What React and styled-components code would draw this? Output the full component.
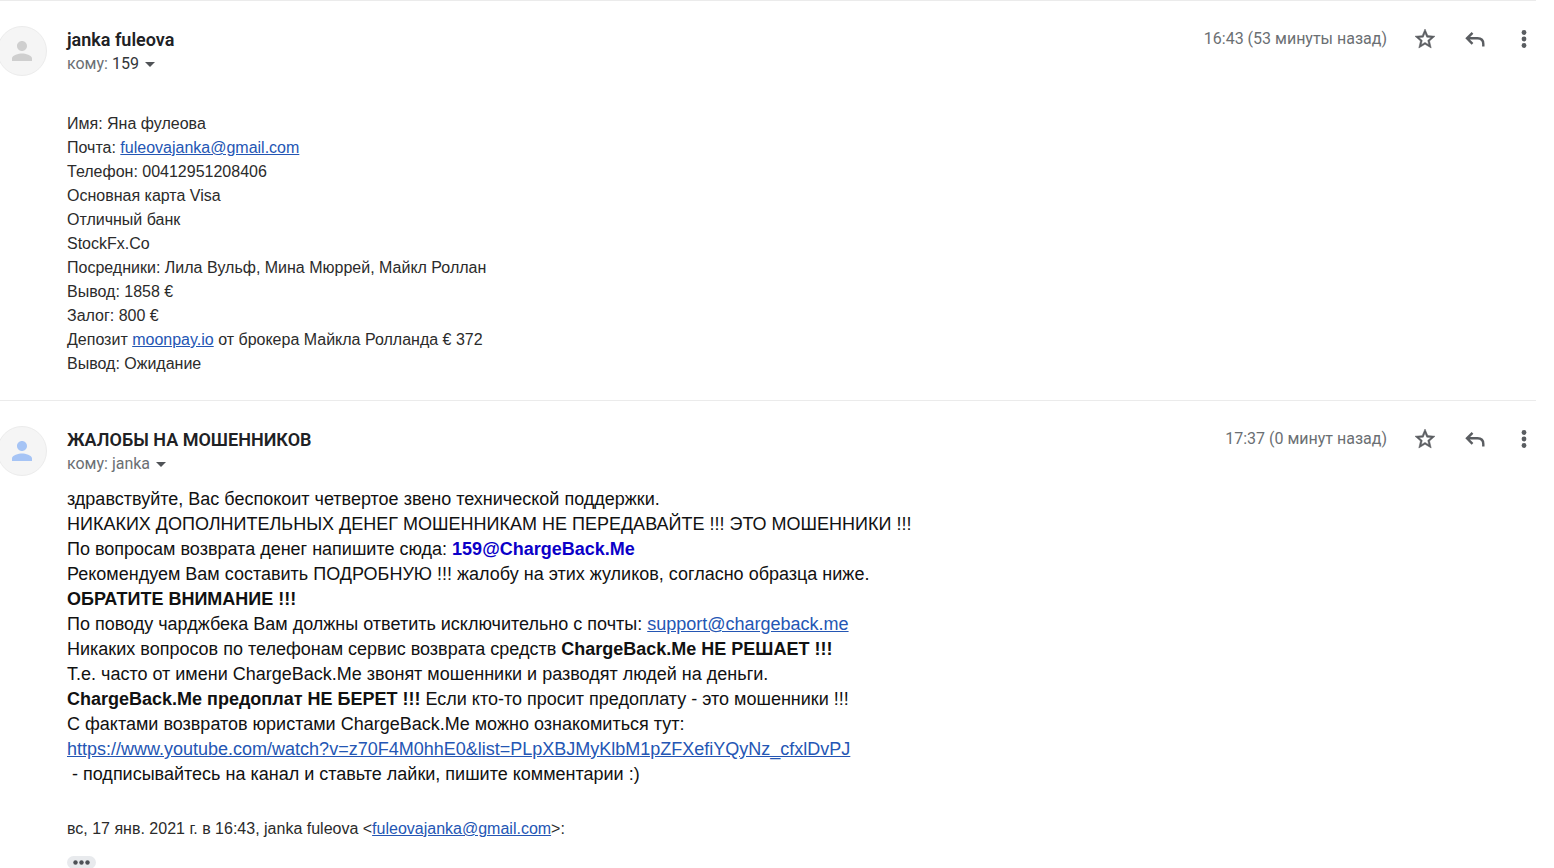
import React from "react";
import styled, { createGlobalStyle } from "styled-components";

const GlobalStyle = createGlobalStyle`
  * { box-sizing: border-box; }
  body {
    margin: 0;
    background: #fff;
    overflow-x: hidden;
    font-family: "Liberation Sans", Arial, sans-serif;
  }
`;

const Thread = styled.main`
  padding-right: 18px;
`;

const Message = styled.article`
  display: grid;
  grid-template-columns: 47px minmax(0, 1fr);
  column-gap: 20px;
  border-top: 1px solid #ebebeb;
  padding-top: 25px;
  padding-bottom: ${(p) => (p.$last ? "0" : "24px")};
`;

const Avatar = styled.div`
  width: 50px;
  height: 50px;
  margin-left: -3px;
  border: 1px solid #ececec;
  border-radius: 50%;
  background: #f5f5f5;
  color: ${(p) => p.$color};
  display: flex;
  align-items: center;
  justify-content: center;
`;

const Content = styled.div`
  min-width: 0;
`;

const Header = styled.header`
  display: flex;
  justify-content: space-between;
  align-items: flex-start;
  font-family: Roboto, Arial, sans-serif;
`;

const Sender = styled.h3`
  margin: 0;
  padding-top: 2px;
  font-size: 18px;
  line-height: 24px;
  font-weight: 600;
  color: #202124;
`;

const Recipient = styled.button`
  display: flex;
  align-items: center;
  gap: 6px;
  padding: 0;
  border: 0;
  background: none;
  font-family: inherit;
  font-size: 16px;
  line-height: 24px;
  color: #6b6f73;
`;

const Strong = styled.span`
  color: #333639;
`;

const Actions = styled.div`
  display: flex;
  align-items: center;
`;

const Sent = styled.time`
  margin-right: 25px;
  font-size: 16px;
  line-height: 24px;
  color: #6b6f73;
`;

const IconButton = styled.button`
  display: flex;
  align-items: center;
  justify-content: center;
  width: ${(p) => (p.$end ? "24px" : "26px")};
  height: 26px;
  margin-right: ${(p) => (p.$end ? "0" : "24px")};
  padding: 0;
  border: 0;
  background: none;
  color: #5a5d61;
`;

const Body = styled.div`
  padding-top: ${(p) => (p.$large ? "11px" : "36px")};
  font-size: ${(p) => (p.$large ? "18px" : "16px")};
  line-height: ${(p) => (p.$large ? "25px" : "24px")};
  color: ${(p) => (p.$large ? "#111" : "#2b2b2b")};
`;

const Line = styled.div`
  white-space: pre-wrap;
  overflow-wrap: anywhere;
`;

const Link = styled.a`
  color: #2456b4;
`;

const Address = styled.a`
  color: #0b00c8;
  font-weight: 700;
  text-decoration: none;
`;

const Quote = styled.p`
  margin: 0;
  padding-top: 30px;
  font-size: 16px;
  line-height: 24px;
  color: #2b2b2b;
`;

const More = styled.button`
  display: flex;
  align-items: center;
  justify-content: center;
  width: 29px;
  height: 13px;
  margin-top: 15px;
  padding: 0;
  border: 0;
  border-radius: 7px;
  background: #e8eaed;
  color: #4d5156;
`;

const Person = () => (
  <svg width="30" height="30" viewBox="0 0 24 24" fill="currentColor" aria-hidden="true">
    <path d="M12 12c2.21 0 4-1.79 4-4s-1.79-4-4-4-4 1.79-4 4 1.79 4 4 4zm0 2c-2.670 0-8 1.340-8 4v2h16v-2c0-2.660-5.330-4-8-4z" />
  </svg>
);

const Caret = () => (
  <svg width="10" height="5" viewBox="0 0 10 5" fill="#505357" aria-hidden="true">
    <path d="M0 0h10L5 5z" />
  </svg>
);

const Star = () => (
  <svg width="24" height="24" viewBox="0 0 24 24" fill="currentColor" stroke="currentColor" strokeWidth=".5" aria-hidden="true">
    <path d="M22 9.24l-7.19-.62L12 2 9.19 8.63 2 9.24l5.46 4.73L5.82 21 12 17.27 18.18 21l-1.63-7.03L22 9.24zM12 15.4l-3.76 2.27 1-4.28-3.32-2.88 4.38-.38L12 6.1l1.71 4.04 4.38.38-3.32 2.88 1 4.28L12 15.4z" />
  </svg>
);

const Reply = () => (
  <svg width="26" height="26" viewBox="0 0 26 26" fill="none" stroke="currentColor" strokeWidth="2.4" aria-hidden="true">
    <path d="M10.5 6.800L5 12.300l5.500 5.500M5 12.300H15.500Q21.300 12.300 21.300 18V20.500" />
  </svg>
);

const Dots = () => (
  <svg width="24" height="26" viewBox="0 0 24 26" fill="currentColor" aria-hidden="true">
    <circle cx="12" cy="6.500" r="2.400" />
    <circle cx="12" cy="13" r="2.400" />
    <circle cx="12" cy="19.500" r="2.400" />
  </svg>
);

const Ellipsis = () => (
  <svg width="19" height="5" viewBox="0 0 19 5" fill="currentColor" aria-hidden="true">
    <circle cx="3.500" cy="2.500" r="2.200" />
    <circle cx="9.500" cy="2.500" r="2.200" />
    <circle cx="15.500" cy="2.500" r="2.200" />
  </svg>
);

function MessageHeader({ sender, to, strong, sent }) {
  return (
    <Header>
      <div>
        <Sender>{sender}</Sender>
        <Recipient type="button">
          <span>кому: {strong ? <Strong>{to}</Strong> : to}</span>
          <Caret />
        </Recipient>
      </div>
      <Actions>
        <Sent>{sent}</Sent>
        <IconButton type="button" aria-label="Пометить"><Star /></IconButton>
        <IconButton type="button" aria-label="Ответить"><Reply /></IconButton>
        <IconButton type="button" aria-label="Ещё" $end><Dots /></IconButton>
      </Actions>
    </Header>
  );
}

const videoUrl = "https://www.youtube.com/watch?v=z70F4M0hhE0&list=PLpXBJMyKlbM1pZFXefiYQyNz_cfxlDvPJ";

export default function App() {
  return (
    <>
      <GlobalStyle />
      <Thread>
        <Message>
          <Avatar $color="#cfcfcf"><Person /></Avatar>
          <Content>
            <MessageHeader sender="janka fuleova" to="159" strong sent="16:43 (53 минуты назад)" />
            <Body>
              <Line>Имя: Яна фулеова</Line>
              <Line>Почта: <Link href="mailto:fuleovajanka@gmail.com">fuleovajanka@gmail.com</Link></Line>
              <Line>Телефон: 00412951208406</Line>
              <Line>Основная карта Visa</Line>
              <Line>Отличный банк</Line>
              <Line>StockFx.Co</Line>
              <Line>Посредники: Лила Вульф, Мина Мюррей, Майкл Роллан</Line>
              <Line>Вывод: 1858 €</Line>
              <Line>Залог: 800 €</Line>
              <Line>Депозит <Link href="#moonpay">moonpay.io</Link> от брокера Майкла Ролланда € 372</Line>
              <Line>Вывод: Ожидание</Line>
            </Body>
          </Content>
        </Message>
        <Message $last>
          <Avatar $color="#a6c4f5"><Person /></Avatar>
          <Content>
            <MessageHeader sender="ЖАЛОБЫ НА МОШЕННИКОВ" to="janka" sent="17:37 (0 минут назад)" />
            <Body $large>
              <Line>здравствуйте, Вас беспокоит четвертое звено технической поддержки.</Line>
              <Line>НИКАКИХ ДОПОЛНИТЕЛЬНЫХ ДЕНЕГ МОШЕННИКАМ НЕ ПЕРЕДАВАЙТЕ !!! ЭТО МОШЕННИКИ !!!</Line>
              <Line>По вопросам возврата денег напишите сюда: <Address href="mailto:159@ChargeBack.Me">159@ChargeBack.Me</Address></Line>
              <Line>Рекомендуем Вам составить ПОДРОБНУЮ !!! жалобу на этих жуликов, согласно образца ниже.</Line>
              <Line><b>ОБРАТИТЕ ВНИМАНИЕ !!!</b></Line>
              <Line>По поводу чарджбека Вам должны ответить исключительно с почты: <Link href="mailto:support@chargeback.me">support@chargeback.me</Link></Line>
              <Line>Никаких вопросов по телефонам сервис возврата средств <b>ChargeBack.Me НЕ РЕШАЕТ !!!</b></Line>
              <Line>Т.е. часто от имени ChargeBack.Me звонят мошенники и разводят людей на деньги.</Line>
              <Line><b>ChargeBack.Me предоплат НЕ БЕРЕТ !!!</b> Если кто-то просит предоплату - это мошенники !!!</Line>
              <Line>С фактами возвратов юристами ChargeBack.Me можно ознакомиться тут:</Line>
              <Line><Link href="#video">{videoUrl}</Link></Line>
              <Line> - подписывайтесь на канал и ставьте лайки, пишите комментарии :)</Line>
            </Body>
            <Quote>
              вс, 17 янв. 2021 г. в 16:43, janka fuleova &lt;<Link href="mailto:fuleovajanka@gmail.com">fuleovajanka@gmail.com</Link>&gt;:
            </Quote>
            <More type="button" aria-label="Показать скрытый текст"><Ellipsis /></More>
          </Content>
        </Message>
      </Thread>
    </>
  );
}
